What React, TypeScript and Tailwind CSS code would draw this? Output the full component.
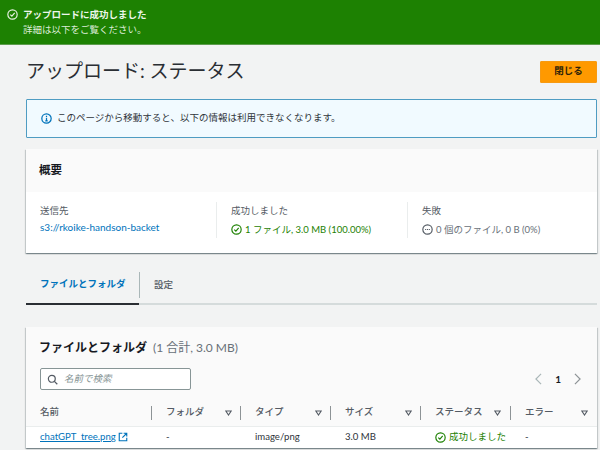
function CheckCircle({ className }: { className: string }) {
  return (
    <svg viewBox="0 0 16 16" fill="none" stroke="currentColor" strokeWidth="1.7" className={className}>
      <circle cx="8" cy="8" r="6.8" />
      <path d="M4.8 8.2 7.1 10.5 11.2 5.8" />
    </svg>
  );
}
function Arrow() {
  return (
    <svg viewBox="0 0 10 8" className="w-[7px] h-[6px] shrink-0" fill="none" stroke="#545b64" strokeWidth="1.5">
      <path d="M1 1h8L5 7z" />
    </svg>
  );
}
function Head({ label, arrowGap, sep = true }: { label: string; arrowGap: string; sep?: boolean }) {
  return (
    <div className="flex items-center h-[20px] pl-[14px]">
      <span className={`${arrowGap} shrink-0 text-[9.5px] font-medium text-[#545b64]`}>{label}</span>
      <Arrow />
      <div className="flex-1" />
      {sep && <div className="w-px h-[14px] bg-[#8d9396]" />}
    </div>
  );
}
export default function App() {
  return (
    <div className="w-[600px] h-[450px] overflow-hidden bg-[#f2f3f3] text-[#16191f] flex flex-col [font-family:'Lato','Noto_Sans_CJK_JP',sans-serif]">
      <div className="h-[45px] shrink-0 bg-[#1d8102] border-b border-[#5d9c4d] flex items-start pt-[7px] pl-[7px] text-white">
        <CheckCircle className="w-[11px] h-[11px] mt-[2px] text-[#e9f3e6]" />
        <div className="ml-[5px] leading-[15px]">
          <div className="text-[9.5px] font-bold text-[#eef6ec]">アップロードに成功しました</div>
          <div className="text-[9.5px] text-[#dcecd8]">詳細は以下をご覧ください。</div>
        </div>
      </div>

      <div className="flex flex-col pl-[26px] pr-[3px]">
        <div className="h-[54px] flex items-center justify-between">
          <h1 className="mb-[4px] text-[19px] font-normal leading-none text-[#2a2e33]">アップロード: ステータス</h1>
          <button className="w-[57px] h-[22px] mb-[1px] bg-[#ff9900] border border-[#f79a12] rounded-[1px] text-[9.5px] font-bold text-[#2e2208]">閉じる</button>
        </div>

        <div className="h-[39px] bg-[#f1faff] border border-[#4f9cc2] rounded-[1px] flex items-center pl-[14px]">
          <svg viewBox="0 0 16 16" className="w-[11px] h-[11px] text-[#0073bb]" fill="none" stroke="currentColor" strokeWidth="1.8">
            <circle cx="8" cy="8" r="6.8" />
            <path d="M8 7v4.5M6.2 11.5h3.6M8 4v1.7" />
          </svg>
          <span className="ml-[5px] text-[9.5px] text-[#2f343a]">このページから移動すると、以下の情報は利用できなくなります。</span>
        </div>

        <div className="mt-[11px] h-[104px] bg-white shadow-[0_1px_1px_0_rgba(0,28,36,0.3),1px_1px_1px_0_rgba(0,28,36,0.15),-1px_1px_1px_0_rgba(0,28,36,0.15)]">
          <div className="h-[43px] bg-[#fafafa] flex items-center pl-[13px] pb-[1px] text-[11.5px] font-bold">概要</div>
          <div className="grid grid-cols-[190px_191px_1fr] pt-[10px]">
            <div className="h-[36px] pl-[14px] leading-[17px]">
              <div className="text-[9.5px] text-[#545b64]">送信先</div>
              <div className="text-[10px] text-[#0073bb]">s3://rkoike-handson-backet</div>
            </div>
            <div className="h-[36px] pl-[14px] border-l border-[#eaeded] leading-[17px]">
              <div className="text-[9.5px] text-[#545b64]">成功しました</div>
              <div className="flex items-center mt-[2px] text-[9.5px] text-[#1d8102]">
                <CheckCircle className="w-[11px] h-[11px] mr-[3px]" />
                <span>1 ファイル, 3.0 MB (100.00%)</span>
              </div>
            </div>
            <div className="h-[36px] pl-[14px] border-l border-[#eaeded] leading-[17px]">
              <div className="text-[9.5px] text-[#545b64]">失敗</div>
              <div className="flex items-center mt-[2px] text-[9.5px] text-[#687078]">
                <svg viewBox="0 0 16 16" className="w-[11px] h-[11px] mr-[3px] text-[#545b64]" fill="none" stroke="currentColor" strokeWidth="1.7">
                  <circle cx="8" cy="8" r="6.8" />
                  <path d="M4.5 8h7" strokeDasharray="1.6 1.1" />
                </svg>
                0 個のファイル, 0 B (0%)
              </div>
            </div>
          </div>
        </div>

        <div className="mt-[12px] h-[40px] border-b-[2px] border-[#d5dbdb] flex">
          <div className="w-[113px] h-[40px] shrink-0 border-b-[2px] border-[#2a2e33] flex items-center pl-[14px] pt-[1px] text-[9.5px] font-bold text-[#0073bb]">ファイルとフォルダ</div>
          <div className="h-[26px] mt-[7px] border-l border-[#aab7b8] pl-[14px] pt-[1px] flex items-center text-[9.5px] font-medium text-[#545b64]">設定</div>
        </div>

        <div className="mt-[22px] h-[121px] bg-white shadow-[0_1px_1px_0_rgba(0,28,36,0.3),1px_1px_1px_0_rgba(0,28,36,0.15),-1px_1px_1px_0_rgba(0,28,36,0.15)]">
          <div className="h-[70px] bg-[#fafafa] px-[14px]">
            <div className="h-[41px] flex items-center pt-[1px] -ml-[1px]">
              <span className="text-[12px] font-bold">ファイルとフォルダ</span>
              <span className="ml-[6px] text-[12px] text-[#687078]">(1 合計, 3.0 MB)</span>
            </div>
            <div className="flex items-center justify-between">
              <div className="w-[151px] h-[22px] bg-white border border-[#879596] rounded-[2px] flex items-center pl-[6px]">
                <svg viewBox="0 0 16 16" className="w-[11px] h-[11px]" fill="none" stroke="#545b64" strokeWidth="1.8">
                  <circle cx="7" cy="7" r="5" />
                  <path d="M10.7 10.7 15 15" />
                </svg>
                <span className="ml-[6px] text-[9.5px] italic text-[#879596]">名前で検索</span>
              </div>
              <div className="flex items-center gap-[13px] pr-[2px]">
                <svg viewBox="0 0 8 14" className="w-[7px] h-[12px]" fill="none" stroke="#aab7b8" strokeWidth="1.4"><path d="M7 1 1 7l6 6" /></svg>
                <span className="text-[10px] font-bold">1</span>
                <svg viewBox="0 0 8 14" className="w-[7px] h-[12px]" fill="none" stroke="#8d9396" strokeWidth="1.4"><path d="M1 1l6 6-6 6" /></svg>
              </div>
            </div>
          </div>
          <div className="h-[30px] pt-[2px] bg-[#fafafa] border-b border-[#eaeded] grid grid-cols-[126px_89px_90px_90px_90px_86px] items-center">
            <div className="flex items-center h-[20px] pl-[14px]">
              <span className="text-[9.5px] font-medium text-[#545b64]">名前</span>
              <div className="flex-1" />
              <div className="w-px h-[14px] bg-[#8d9396]" />
            </div>
            <Head label="フォルダ" arrowGap="w-[59px]" />
            <Head label="タイプ" arrowGap="w-[60px]" />
            <Head label="サイズ" arrowGap="w-[60px]" />
            <Head label="ステータス" arrowGap="w-[59px]" />
            <div className="flex items-center h-[20px] pl-[14px]">
              <span className="w-[56px] shrink-0 text-[9.5px] font-medium text-[#545b64]">エラー</span>
              <Arrow />
            </div>
          </div>
          <div className="h-[20px] grid grid-cols-[126px_89px_90px_90px_90px_86px] items-center text-[9.6px] text-[#2f343a]">
            <div className="pl-[14px] flex items-center text-[#0073bb]">
              <span className="underline">chatGPT_tree.png</span>
              <svg viewBox="0 0 16 16" className="w-[10px] h-[10px] ml-[2px]" fill="none" stroke="currentColor" strokeWidth="1.8">
                <path d="M7 2H2v12h12V9M9 2h5v5M14 2 7 9" />
              </svg>
            </div>
            <div className="pl-[14px]">-</div>
            <div className="pl-[14px]">image/png</div>
            <div className="pl-[14px]">3.0 MB</div>
            <div className="pl-[14px] flex items-center text-[#1d8102]">
              <CheckCircle className="w-[11px] h-[11px] mr-[3px]" />
              <span className="text-[9.5px]">成功しました</span>
            </div>
            <div className="pl-[14px]">-</div>
          </div>
        </div>
      </div>
    </div>
  );
}
